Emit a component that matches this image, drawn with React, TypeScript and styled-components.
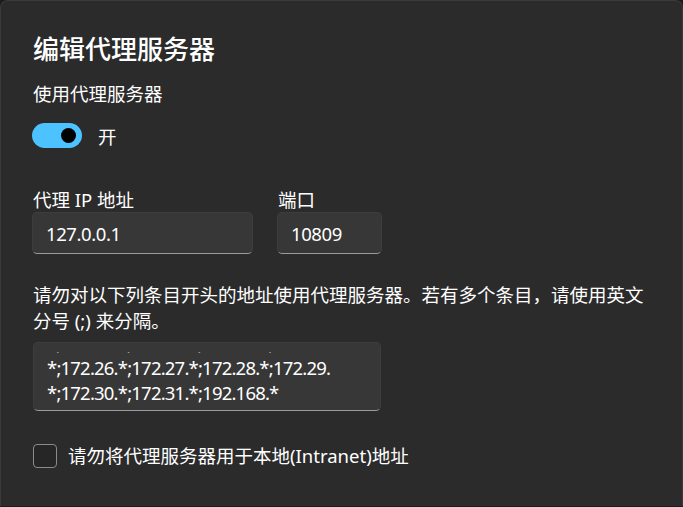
import React from "react";
import styled, { createGlobalStyle } from "styled-components";

const Global = createGlobalStyle`
  html, body {
    margin: 0;
    padding: 0;
    background: #1c1c1c;
    width: 683px;
    height: 507px;
    overflow: hidden;
  }
  * { box-sizing: border-box; }
`;

const FONT = `"Noto Sans", "Noto Sans CJK SC", sans-serif`;

const Dialog = styled.div`
  width: 683px;
  height: 506px;
  background: #2b2b2b;
  border: 1px solid #3a3a3a;
  border-bottom: none;
  border-radius: 8px 8px 0 0;
  padding: 30px 31px 0 31px;
  display: flex;
  flex-direction: column;
  font-family: ${FONT};
  color: #ffffff;
`;

const Title = styled.h1`
  margin: 0;
  font-size: 26px;
  line-height: 36px;
  font-weight: 500;
  padding-left: 1px;
`;

const Label = styled.div<{ $mt?: number }>`
  font-size: 18.5px;
  line-height: 26px;
  margin-top: ${(p) => p.$mt ?? 0}px;
  padding-left: 1px;
`;

const ToggleRow = styled.div`
  display: flex;
  align-items: center;
  gap: 16px;
  margin-top: 16px;
  height: 25px;
`;

const Toggle = styled.div<{ $on: boolean }>`
  width: 50px;
  height: 25px;
  border-radius: 13px;
  background: ${(p) => (p.$on ? "#4cc2ff" : "transparent")};
  display: flex;
  align-items: center;
  justify-content: ${(p) => (p.$on ? "flex-end" : "flex-start")};
  padding: 0 6px;
`;

const Knob = styled.div`
  width: 15px;
  height: 15px;
  border-radius: 50%;
  background: #000000;
`;

const ToggleText = styled.span`
  font-size: 18.5px;
  line-height: 25px;
  margin-top: 2px;
`;

const FieldRow = styled.div`
  display: flex;
  gap: 24px;
  margin-top: 40px;
`;

const Field = styled.div<{ $w: number }>`
  display: flex;
  flex-direction: column;
  width: ${(p) => p.$w}px;
`;

const FieldLabel = styled.div`
  font-size: 18.5px;
  line-height: 24px;
  padding-left: 1px;
`;

const Input = styled.div`
  height: 42px;
  background: #373737;
  border: 1px solid #3d3d3d;
  border-bottom: 1px solid #9a9a9a;
  border-radius: 5px;
  padding: 0 13px;
  display: flex;
  align-items: center;
  font-size: 18.5px;
  letter-spacing: -0.4px;
  color: #ffffff;
`;

const Paragraph = styled.p`
  margin: 28px 0 0 0;
  font-size: 18.5px;
  line-height: 26px;
  padding-left: 1px;
`;

const TextArea = styled.div`
  margin-top: 8px;
  margin-left: 1px;
  width: 348px;
  height: 69px;
  background: #373737;
  border: 1px solid #3d3d3d;
  border-bottom: 1px solid #9a9a9a;
  border-radius: 5px;
  padding: 9px 13px 2px 13px;
  display: flex;
  flex-direction: column;
`;

const Viewport = styled.div`
  flex: 1;
  overflow: hidden;
`;

const Lines = styled.div`
  margin-top: -22px;
  font-size: 18.5px;
  line-height: 25px;
  white-space: nowrap;
  letter-spacing: -0.8px;
`;

const CheckRow = styled.label`
  display: flex;
  align-items: center;
  gap: 11px;
  margin-top: 32px;
  padding-left: 1px;
`;

const Box = styled.span`
  width: 24px;
  height: 24px;
  border: 1.5px solid #8b8b8b;
  border-radius: 4px;
  background: #262626;
`;

const CheckText = styled.span`
  font-size: 18.5px;
  line-height: 26px;
`;

const lines = [
  "*;172.22.*;172.23.*;172.24.*;172.25.",
  "*;172.26.*;172.27.*;172.28.*;172.29.",
  "*;172.30.*;172.31.*;192.168.*",
];

export default function App() {
  return (
    <>
      <Global />
      <Dialog>
        <Title>编辑代理服务器</Title>
        <Label $mt={14}>使用代理服务器</Label>
        <ToggleRow>
          <Toggle $on>
            <Knob />
          </Toggle>
          <ToggleText>开</ToggleText>
        </ToggleRow>
        <FieldRow>
          <Field $w={221}>
            <FieldLabel>代理 IP 地址</FieldLabel>
            <Input>127.0.0.1</Input>
          </Field>
          <Field $w={105}>
            <FieldLabel>端口</FieldLabel>
            <Input>10809</Input>
          </Field>
        </FieldRow>
        <Paragraph>
          请勿对以下列条目开头的地址使用代理服务器。若有多个条目，请使用英文
          <br />
          分号 (;) 来分隔。
        </Paragraph>
        <TextArea>
          <Viewport>
            <Lines>
              {lines.map((l) => (
                <div key={l}>{l}</div>
              ))}
            </Lines>
          </Viewport>
        </TextArea>
        <CheckRow>
          <Box />
          <CheckText>请勿将代理服务器用于本地(Intranet)地址</CheckText>
        </CheckRow>
      </Dialog>
    </>
  );
}
